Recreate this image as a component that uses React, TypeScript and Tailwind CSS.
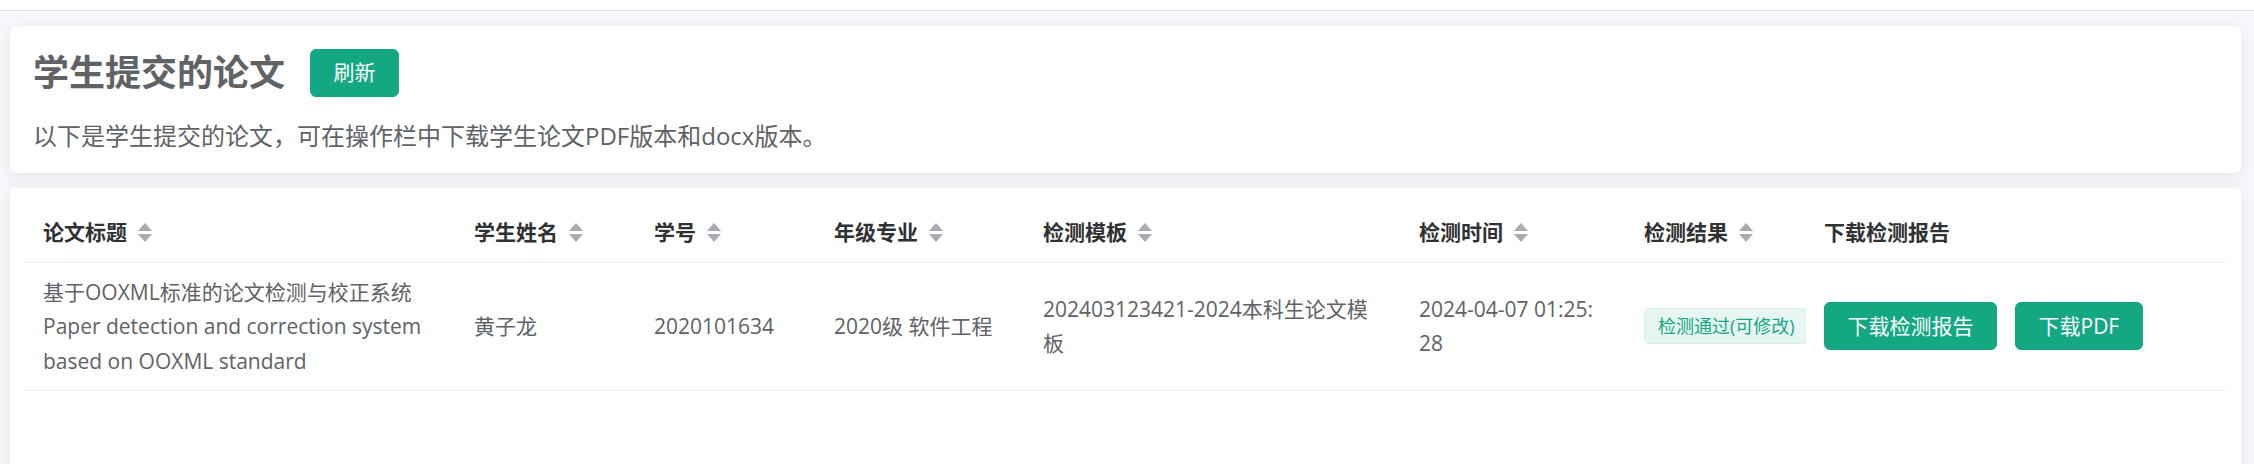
const font = "font-['Open_Sans','Noto_Sans_CJK_SC',sans-serif]";

const SortCaret = () => (
  <svg width="14" height="19" viewBox="0 0 14 19" className="ml-[11px] shrink-0">
    <polygon points="7,0 14,8 0,8" fill="#a8abb2" />
    <polygon points="0,11 14,11 7,19" fill="#a8abb2" />
  </svg>
);

const columns = [
  { label: "论文标题", sort: true },
  { label: "学生姓名", sort: true },
  { label: "学号", sort: true },
  { label: "年级专业", sort: true },
  { label: "检测模板", sort: true },
  { label: "检测时间", sort: true },
  { label: "检测结果", sort: true },
  { label: "下载检测报告", sort: false },
];

const gridCols = "grid grid-cols-[431px_180px_180px_209px_376px_225px_180px_420px]";

const Cell = ({ children }: { children: React.ReactNode }) => (
  <div className="flex flex-col justify-center items-start overflow-hidden px-[18px] py-[12px] text-[21px] leading-[34.5px] text-[#606266]">
    {children}
  </div>
);

const GreenButton = ({ children, className = "" }: { children: React.ReactNode; className?: string }) => (
  <button
    className={`h-[48px] px-[22.5px] rounded-[6px] border border-[#13a882] bg-[#13a882] text-white text-[21px] whitespace-nowrap ${className}`}
  >
    {children}
  </button>
);

export default function App() {
  return (
    <div className={`${font} h-[464px] overflow-hidden bg-[#f7f8fb]`}>
      <div className="h-[11px] bg-white border-b border-[#dcdfe6]" />

      {/* 标题卡片 */}
      <div className="mt-[15px] ml-[10px] mr-[13px] rounded-[6px] bg-white shadow-[0_3px_18px_0_rgba(0,0,0,0.08)] px-[23px] pt-[23px] pb-[19px]">
        <div className="flex items-center h-[48px]">
          <h1 className="text-[36px] font-bold text-[#606266] leading-[48px]">学生提交的论文</h1>
          <GreenButton className="ml-[25px]">刷新</GreenButton>
        </div>
        <p className="mt-[21px] text-[24px] leading-[36px] text-[#606266]">
          以下是学生提交的论文，可在操作栏中下载学生论文PDF版本和docx版本。
        </p>
      </div>

      {/* 论文表格 */}
      <div className="mt-[15px] ml-[10px] mr-[13px] h-[320px] rounded-t-[6px] bg-white shadow-[0_3px_18px_0_rgba(0,0,0,0.08)] p-[15px]">
        <div className={`${gridCols} border-b border-[#ebeef5]`}>
          {columns.map((c) => (
            <div
              key={c.label}
              className="flex items-center px-[18px] py-[12px] text-[21px] leading-[34.5px] font-bold text-[#303133] whitespace-nowrap"
            >
              {c.label}
              {c.sort && <SortCaret />}
            </div>
          ))}
        </div>

        <div className={`${gridCols} border-b border-[#ebeef5]`}>
          <Cell>
            <div className="whitespace-nowrap">基于OOXML标准的论文检测与校正系统</div>
            <div className="whitespace-nowrap">Paper detection and correction system</div>
            <div className="whitespace-nowrap">based on OOXML standard</div>
          </Cell>
          <Cell>黄子龙</Cell>
          <Cell>2020101634</Cell>
          <Cell>2020级 软件工程</Cell>
          <Cell>
            <div className="whitespace-nowrap">202403123421-2024本科生论文模</div>
            <div>板</div>
          </Cell>
          <Cell>
            <div className="whitespace-nowrap">2024-04-07 01:25:</div>
            <div>28</div>
          </Cell>
          <Cell>
            <span className="shrink-0 w-max h-[36px] flex items-center px-[13px] rounded-[6px] border border-[#d0eee6] bg-[#e7f6f2] text-[#13a882] text-[18px] whitespace-nowrap">
              检测通过(可修改)
            </span>
          </Cell>
          <div className="flex items-center gap-[18px] px-[18px]">
            <GreenButton>下载检测报告</GreenButton>
            <GreenButton>下载PDF</GreenButton>
          </div>
        </div>
      </div>
    </div>
  );
}
